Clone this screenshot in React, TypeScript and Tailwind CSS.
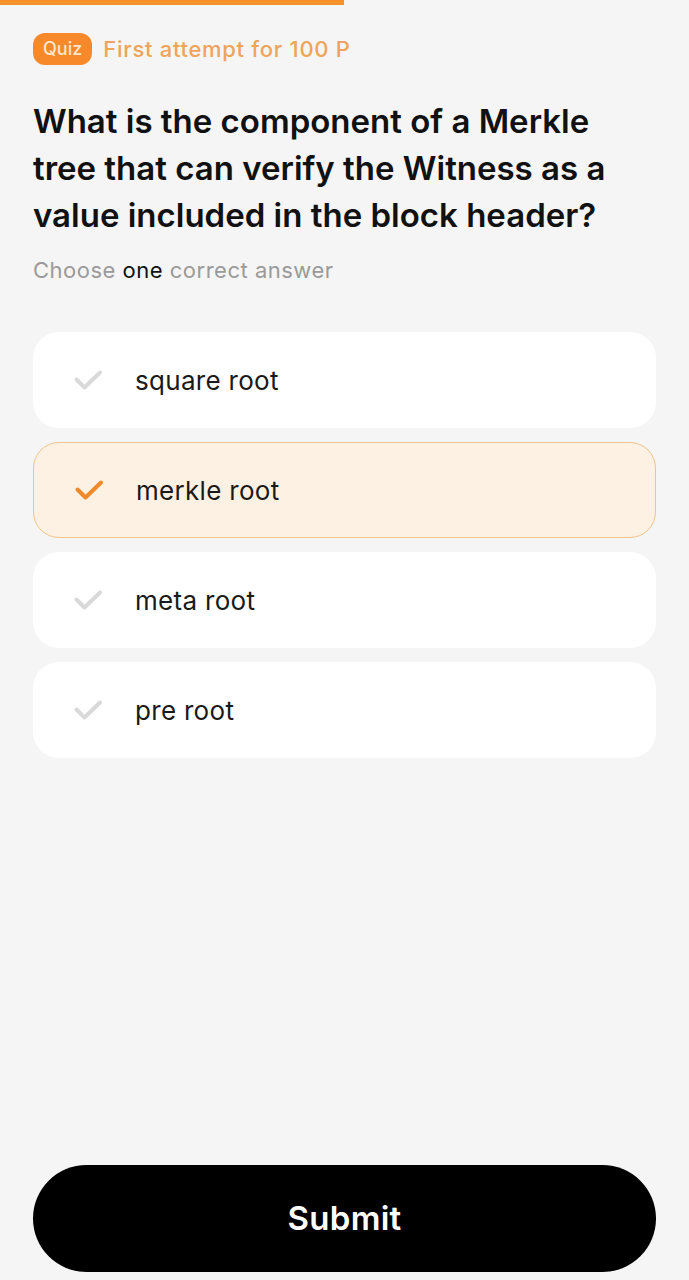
import React from "react";

const options = [
  { label: "square root", selected: false },
  { label: "merkle root", selected: true },
  { label: "meta root", selected: false },
  { label: "pre root", selected: false },
];

function Check({ color }: { color: string }) {
  return (
    <svg width="30" height="22" viewBox="0 0 30 22" fill="none">
      <path
        d="M3.5 10.5 L11.5 18.5 L27 3.5"
        stroke={color}
        strokeWidth="4"
        strokeLinecap="round"
        strokeLinejoin="round"
      />
    </svg>
  );
}

export default function App() {
  return (
    <div
      className="w-[689px] h-[1280px] bg-[#f5f5f5] flex flex-col"
      style={{ fontFamily: "Inter, 'Noto Sans', sans-serif" }}
    >
      <div className="h-[5px] w-[344px] bg-[#f7922a] shrink-0" />
      <div className="px-[33px] pt-[28px] flex flex-col flex-1">
        <div className="flex items-center gap-[11px]">
          <span className="h-[32px] px-[10px] rounded-[12px] bg-[#f7892a] text-[#fde6cc] text-[18px] leading-[32px] font-medium">
            Quiz
          </span>
          <span className="text-[22px] leading-[32px] text-[#eea45a] font-medium tracking-[0.7px]">
            First attempt for 100 P
          </span>
        </div>
        <h1 className="mt-[33px] text-[33px] leading-[47px] font-semibold text-[#111] tracking-[0px]">
          What is the component of a Merkle tree that can verify the Witness as a value included in the block header?
        </h1>
        <p className="mt-[17px] text-[22px] leading-[28px] text-[#9a9a9a] tracking-[0.5px]">
          Choose <span className="text-[#111]">one</span> correct answer
        </p>
        <div className="mt-[48px] flex flex-col gap-[14px]">
          {options.map((o) => (
            <div
              key={o.label}
              className={
                "h-[96px] rounded-[26px] flex items-center pl-[40px] " +
                (o.selected
                  ? "bg-[#fdf1e3] border-[1.5px] border-[#efc48e]"
                  : "bg-white")
              }
            >
              <Check color={o.selected ? "#f0892a" : "#d9d9d9"} />
              <span className="ml-[32px] text-[26px] text-[#1a1a1a] tracking-[0.3px]">
                {o.label}
              </span>
            </div>
          ))}
        </div>
        <div className="flex-1" />
        <button className="mb-[8px] h-[107px] w-full rounded-[54px] bg-black text-white text-[33px] font-semibold tracking-[0.3px]">
          Submit
        </button>
      </div>
    </div>
  );
}
